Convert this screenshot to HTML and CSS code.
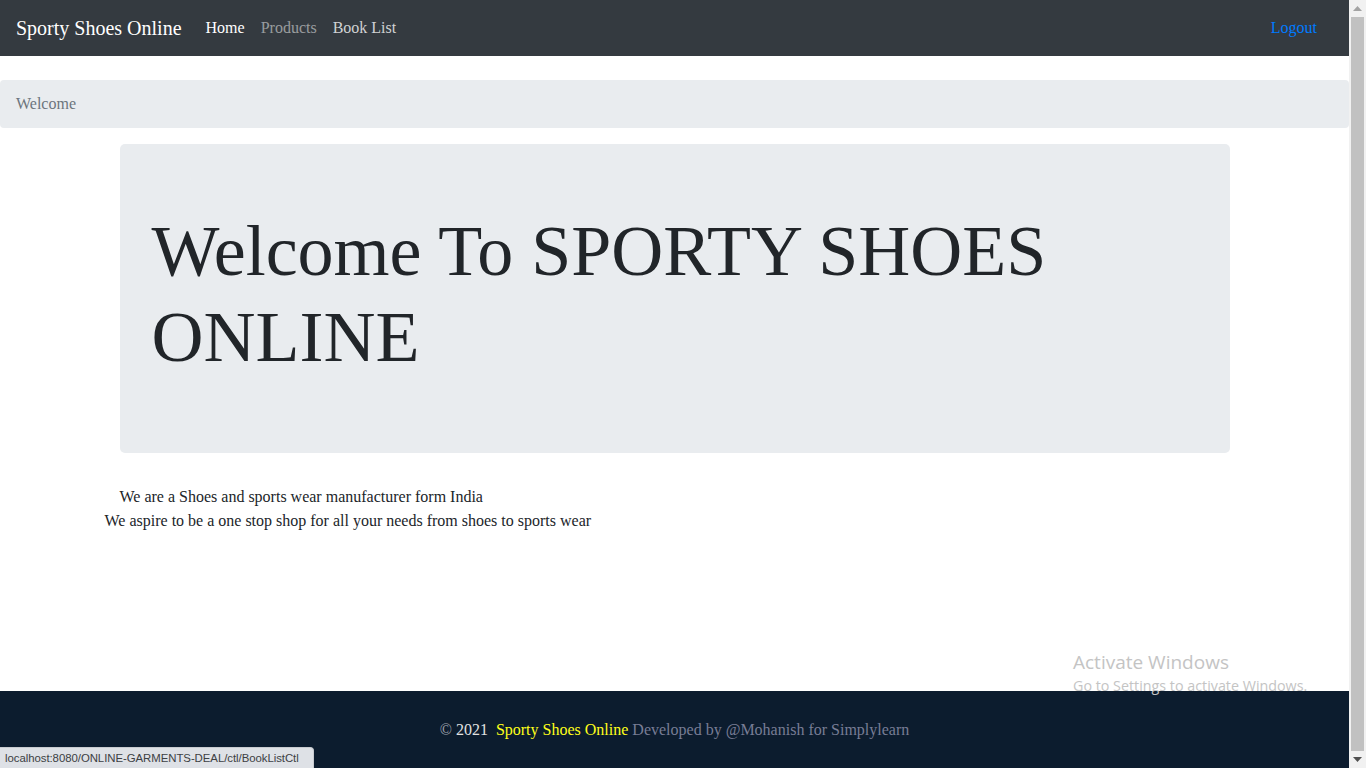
FILE: index.html
```html
<!DOCTYPE html>
<html lang="en">
<head>
<meta charset="utf-8">
<title>Sporty Shoes Online</title>
<link rel="stylesheet" href="styles.css">
</head>
<body>
<div class="app">
  <div class="page">
    <nav class="navbar">
      <a class="brand" href="#">Sporty Shoes Online</a>
      <ul class="nav">
        <li><a class="nav-link active" href="#">Home</a></li>
        <li><a class="nav-link muted" href="#">Products</a></li>
        <li><a class="nav-link soft" href="#">Book List</a></li>
      </ul>
      <a class="nav-link logout" href="#">Logout</a>
    </nav>

    <div class="breadcrumb">Welcome</div>

    <main class="container">
      <div class="jumbotron">
        <h1 class="display">Welcome To SPORTY SHOES ONLINE</h1>
      </div>
      <div class="about">
        <p class="about-line indent">We are a Shoes and sports wear manufacturer form India</p>
        <p class="about-line">We aspire to be a one stop shop for all your needs from shoes to sports wear</p>
      </div>
    </main>

    <footer class="footer">
      <span class="copy">©</span> <span class="year">2021</span>&nbsp; <span class="site">Sporty Shoes Online</span> <span class="dev">Developed by @Mohanish for Simplylearn</span>
    </footer>

    <div class="watermark">
      <div class="wm-title">Activate Windows</div>
      <div class="wm-sub">Go to Settings to activate Windows.</div>
    </div>
    <div class="statusbar">localhost:8080/ONLINE-GARMENTS-DEAL/ctl/BookListCtl</div>
  </div>

  <div class="scrollbar">
    <div class="sb-btn">
      <svg width="9" height="5" viewBox="0 0 9 5"><polygon points="0,5 9,5 4.5,0" fill="#a3a3a3"/></svg>
    </div>
    <div class="sb-track"><div class="sb-thumb"></div></div>
    <div class="sb-btn">
      <svg width="9" height="5" viewBox="0 0 9 5"><polygon points="0,0 9,0 4.5,5" fill="#505050"/></svg>
    </div>
  </div>
</div>
</body>
</html>
```

FILE: styles.css
```css
* { box-sizing: border-box; }
html, body {
  margin: 0;
  padding: 0;
  height: 100%;
  overflow: hidden;
}
body {
  font-family: "Liberation Serif", "Times New Roman", serif;
  font-size: 16px;
  line-height: 1.5;
  color: #212529;
  background: #fff;
}
a { text-decoration: none; }

.app {
  display: flex;
  height: 768px;
}
.page {
  flex: 1;
  display: flex;
  flex-direction: column;
  position: relative;
  min-width: 0;
}

/* navbar */
.navbar {
  display: flex;
  align-items: center;
  height: 56px;
  flex: none;
  padding: 8px 16px;
  background: #343a40;
  margin-bottom: 24px;
}
.brand {
  font-size: 20px;
  line-height: 30px;
  padding: 5px 0;
  margin-right: 16px;
  color: #fff;
}
.nav {
  display: flex;
  list-style: none;
  margin: 0;
  padding: 0;
  flex: 1;
}
.nav-link {
  display: block;
  padding: 8px 8px;
  line-height: 24px;
}
.nav-link.active { color: #fff; }
.nav-link.muted { color: rgba(255,255,255,.5); }
.nav-link.soft { color: rgba(255,255,255,.78); }
.nav-link.logout { color: #007bff; margin-right: 8px; }

/* breadcrumb */
.breadcrumb {
  flex: none;
  background: #e9ecef;
  border-radius: 4px;
  padding: 12px 16px;
  line-height: 24px;
  color: #6c757d;
  margin-bottom: 16px;
}

/* main */
.container {
  width: 1140px;
  margin: 0 auto;
  padding: 0 15px;
  flex: 1;
}
.jumbotron {
  background: #e9ecef;
  border-radius: 5px;
  padding: 64px 32px;
  margin-bottom: 32px;
}
.display {
  margin: 0 0 8px;
  font-size: 72px;
  font-weight: 300;
  line-height: 1.2;
  color: #212529;
}
.about { margin-left: -15px; }
.about-line {
  margin: 0;
  line-height: 24px;
}
.about-line.indent { padding-left: 15px; }

/* footer */
.footer {
  background: #0c1c2e;
  height: 77px;
  flex: none;
  padding-top: 27px;
  text-align: center;
  line-height: 24px;
  color: #d8d8d8;
}
.copy { color: #a2a6ae; }
.year { color: #e2e2e2; }
.site { color: #ffff1a; }
.dev { color: #787d95; }

/* overlays */
.watermark {
  position: absolute;
  left: 1073px;
  top: 649px;
  font-family: "Open Sans", "Noto Sans", sans-serif;
  color: #c4c4c4;
  pointer-events: none;
}
.wm-title {
  font-size: 19px;
  line-height: 26px;
}
.wm-sub {
  font-size: 14.3px;
  line-height: 20px;
  margin-top: 1px;
}
.statusbar {
  position: absolute;
  left: 0;
  bottom: 0;
  width: 314px;
  height: 21px;
  padding: 3px 0 0 5px;
  background: #dee1e6;
  border: 1px solid #c8cbd0;
  border-left: none;
  border-bottom: none;
  border-top-right-radius: 4px;
  font-family: "Liberation Sans", Arial, sans-serif;
  font-size: 11.4px;
  letter-spacing: -0.05px;
  line-height: 15px;
  color: #3c4043;
  white-space: nowrap;
}

/* scrollbar */
.scrollbar {
  width: 17px;
  flex: none;
  background: #f1f1f1;
  display: flex;
  flex-direction: column;
}
.sb-btn {
  height: 17px;
  display: flex;
  align-items: center;
  justify-content: center;
}
.sb-track {
  flex: 1;
  padding: 0 2px;
}
.sb-thumb {
  height: 100%;
  background: #c1c1c1;
}
```
